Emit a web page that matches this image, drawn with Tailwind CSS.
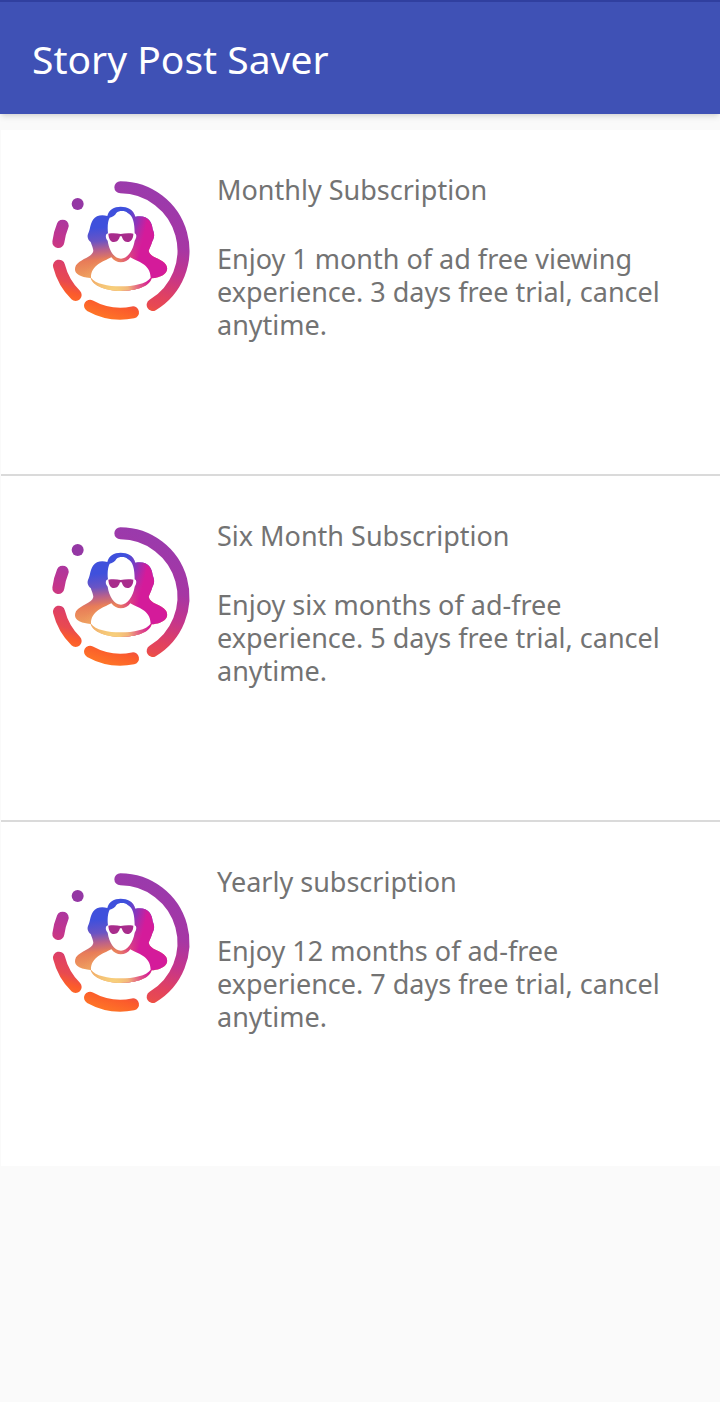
<!DOCTYPE html>
<html lang="en">
<head>
    <meta charset="UTF-8">
    <meta name="viewport" content="width=device-width, initial-scale=1.0">
    <title>Story Post Saver</title>
    <script src="https://cdn.jsdelivr.net/npm/@tailwindcss/browser@4"></script>
    <style>
        body {
            font-family: 'Noto Sans', sans-serif;
        }
    </style>
</head>
<body class="bg-[#fafafa] min-h-screen">
    <!-- Shared logo -->
    <svg class="absolute w-0 h-0" aria-hidden="true">
        <defs>
            <linearGradient id="ring" gradientUnits="userSpaceOnUse" x1="290" y1="40" x2="170" y2="450">
                <stop offset="0" stop-color="#9a3aac"/>
                <stop offset="0.35" stop-color="#a637a4"/>
                <stop offset="0.54" stop-color="#c4358c"/>
                <stop offset="0.72" stop-color="#e2425f"/>
                <stop offset="0.8" stop-color="#e84a50"/>
                <stop offset="0.87" stop-color="#fb5b2c"/>
                <stop offset="1" stop-color="#ff7c25"/>
            </linearGradient>
            <linearGradient id="people" gradientUnits="userSpaceOnUse" x1="200" y1="130" x2="220" y2="330">
                <stop offset="0.2" stop-color="#3f50dc"/>
                <stop offset="0.4" stop-color="#6a54c4"/>
                <stop offset="0.54" stop-color="#b8608c"/>
                <stop offset="0.68" stop-color="#e87c58"/>
                <stop offset="1" stop-color="#f0a860"/>
            </linearGradient>
            <linearGradient id="pink" gradientUnits="userSpaceOnUse" x1="245" y1="190" x2="310" y2="205">
                <stop offset="0" stop-color="#d41b9a" stop-opacity="0"/>
                <stop offset="1" stop-color="#d41b9a"/>
            </linearGradient>
            <radialGradient id="glow" gradientUnits="userSpaceOnUse" cx="222" cy="366" r="110">
                <stop offset="0" stop-color="#f8d47c"/>
                <stop offset="0.4" stop-color="#f5c478" stop-opacity="0.9"/>
                <stop offset="1" stop-color="#f0a060" stop-opacity="0"/>
            </radialGradient>
            <path id="silhouette" d="M202 138C185 133 168 136 159 149C150 162 151 178 144 192C140 203 146 212 152 216C156 228 160 236 160 243C156 262 122 266 108 286C98 306 112 321 152 324C158 348 200 363 242 363C288 363 328 350 335 325C370 322 390 306 378 284C364 264 330 264 326 242C330 232 334 224 337 214C345 200 343 190 338 178C336 152 320 133 286 140C280 118 262 110 242 110C222 110 207 118 202 138Z"/>
        </defs>
        <symbol id="logo" viewBox="0 0 480 480">
            <g fill="none" stroke="url(#ring)" stroke-width="36" stroke-linecap="round">
                <path d="M241 52A190 190 0 0 1 338 405"/>
                <path d="M279 427A190 190 0 0 1 150 407"/>
                <path d="M107 375A190 190 0 0 1 57 287"/>
                <path d="M55 216A190 190 0 0 1 68 167"/>
            </g>
            <circle cx="113" cy="102" r="18" fill="#9437a4"/>
            <use href="#silhouette" fill="url(#people)"/>
            <use href="#silhouette" fill="url(#pink)"/>
            <use href="#silhouette" fill="url(#glow)"/>
            <!-- face, then shoulders -->
            <path fill="#fff" d="M204 190C202 172 203 154 209 143C218 140 225 137 229 129C237 122 254 121 263 129C279 136 284 160 284 190C291 192 290 204 284 212C280 240 262 266 243 266C222 266 207 240 203 212C196 205 195 192 204 190Z"/>
            <path fill="#fff" d="M214 262C222 272 232 277 242 277C254 277 264 272 271 262C290 275 331 280 332 323C320 341 280 349 242 349C205 349 165 341 153 323C153 285 190 275 214 262Z"/>
            <path fill="#a82c8c" d="M205 191C220 188 232 190 242 192C253 190 266 188 280 191C280 206 273 216 262 216C251 216 248 207 245 199H240C237 208 233 216 222 216C211 216 206 206 205 191Z"/>
        </symbol>
    </svg>

    <header class="relative h-[114px] px-8 flex items-center bg-[#3f51b5] border-t-2 border-[#303f9f] shadow-md">
        <h1 class="text-[39px] leading-none text-white">Story Post Saver</h1>
    </header>

    <main class="pt-4">
        <ul class="bg-white border-l border-[#fafafa] divide-y-2 divide-[#dadada]">
            <li class="h-[346px] last:h-[344px] flex items-start pl-[39px] pr-8 pt-10">
                <svg class="w-40 h-40 shrink-0" role="img" aria-label="Story Post Saver logo"><use href="#logo"/></svg>
                <div class="pl-[17px] pt-[3px] text-[27px] leading-[33px] text-[#737373]">
                    <h2>Monthly Subscription</h2>
                    <p class="mt-9">Enjoy 1 month of ad free viewing experience. 3 days free trial, cancel anytime.</p>
                </div>
            </li>
            <li class="h-[346px] last:h-[344px] flex items-start pl-[39px] pr-8 pt-10">
                <svg class="w-40 h-40 shrink-0" role="img" aria-label="Story Post Saver logo"><use href="#logo"/></svg>
                <div class="pl-[17px] pt-[3px] text-[27px] leading-[33px] text-[#737373]">
                    <h2>Six Month Subscription</h2>
                    <p class="mt-9">Enjoy six months of ad-free experience. 5 days free trial, cancel anytime.</p>
                </div>
            </li>
            <li class="h-[346px] last:h-[344px] flex items-start pl-[39px] pr-8 pt-10">
                <svg class="w-40 h-40 shrink-0" role="img" aria-label="Story Post Saver logo"><use href="#logo"/></svg>
                <div class="pl-[17px] pt-[3px] text-[27px] leading-[33px] text-[#737373]">
                    <h2>Yearly subscription</h2>
                    <p class="mt-9">Enjoy 12 months of ad-free experience. 7 days free trial, cancel anytime.</p>
                </div>
            </li>
        </ul>
    </main>
</body>
</html>
